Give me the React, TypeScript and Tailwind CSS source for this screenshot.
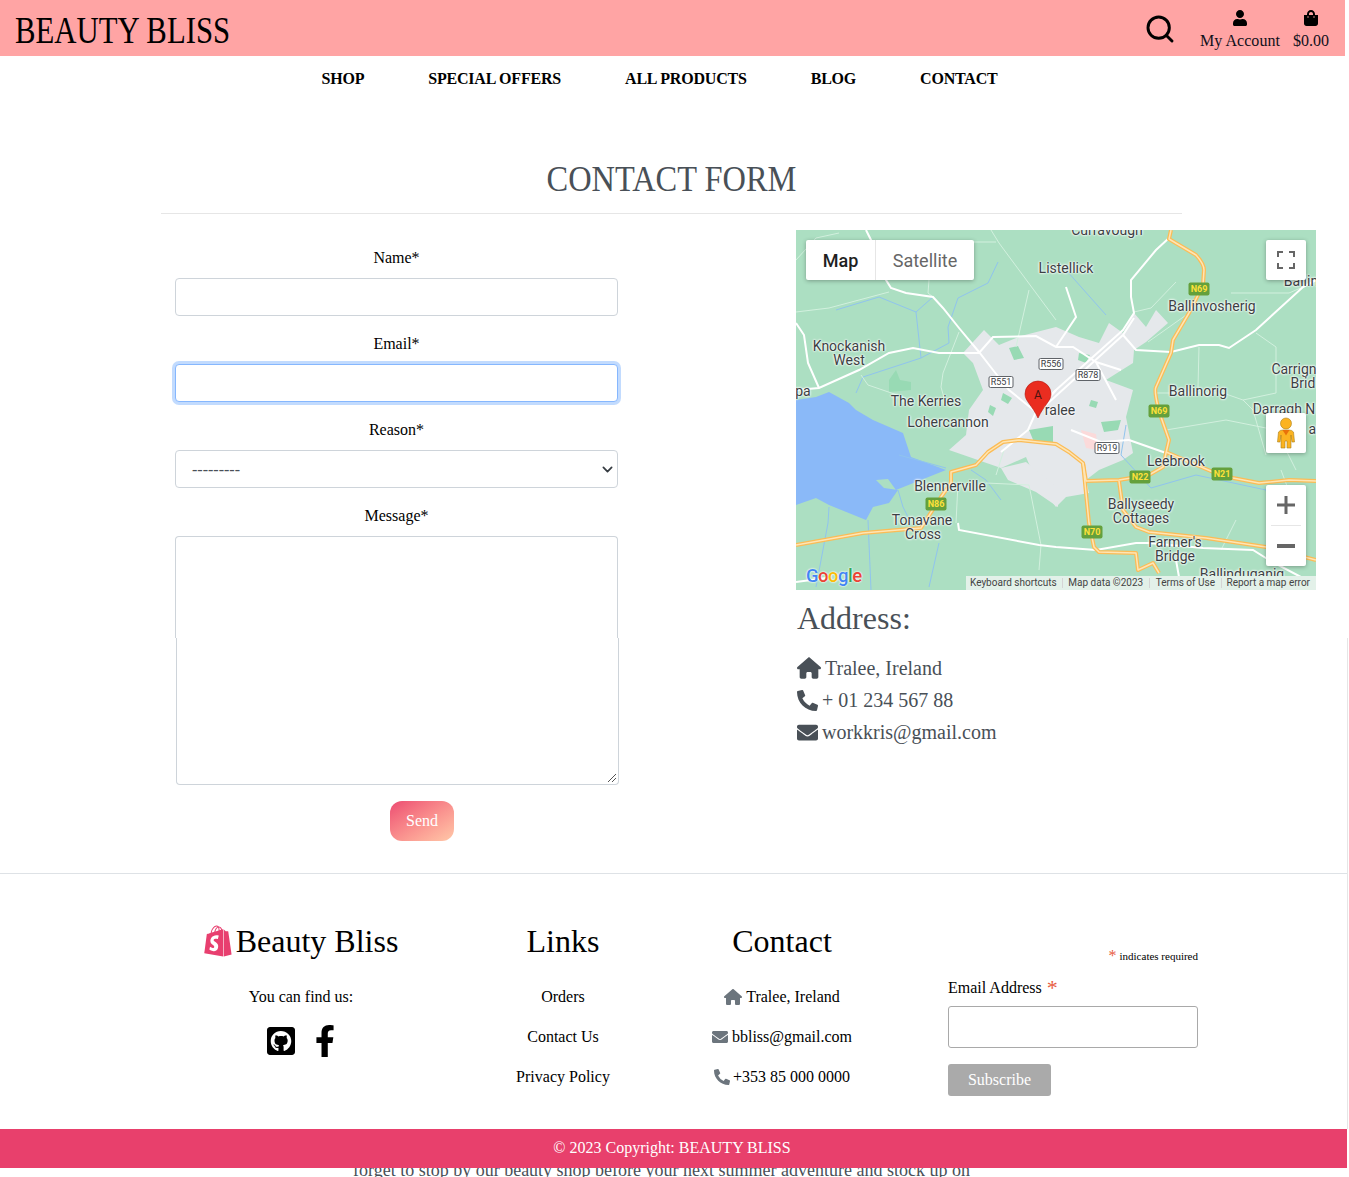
import React from 'react';
import { FaPhoneAlt, FaEnvelope, FaUser, FaShoppingBag, FaGithubSquare, FaFacebookF, FaShopify } from 'react-icons/fa';
import { FaHouse } from 'react-icons/fa6';
import { Search } from 'lucide-react';

const navItems = ['SHOP', 'SPECIAL OFFERS', 'ALL PRODUCTS', 'BLOG', 'CONTACT'];

// place labels on the map canvas
const mapLabels: [string, number, number][] = [
  ['Curravough', 311, 0],
  ['Listellick', 270, 38],
  ['Ballinvosherig', 416, 76],
  ['Ballin', 505, 51],
  ['Knockanish', 53, 116],
  ['West', 53, 130],
  ['Carrign', 498, 139],
  ['Brid', 507, 153],
  ['pa', 7, 161],
  ['Ballinorig', 402, 161],
  ['The Kerries', 130, 171],
  ['Darragh N', 488, 179],
  ['Lohercannon', 152, 192],
  ['ralee', 264, 180],
  ['ai', 518, 199],
  ['Leebrook', 380, 231],
  ['Blennerville', 154, 256],
  ['Ballyseedy', 345, 274],
  ['Cottages', 345, 288],
  ['Tonavane', 126, 290],
  ['Cross', 127, 304],
  ["Farmer's", 379, 312],
  ['Bridge', 379, 326],
  ['Ballinduganig', 446, 344],
];

const shields: [string, number, number][] = [
  ['N69', 403, 59],
  ['N69', 363, 181],
  ['N22', 344, 247],
  ['N21', 426, 244],
  ['N86', 140, 274],
  ['N70', 296, 302],
];

const routes: [string, number, number, number][] = [
  ['R556', 255, 134, 25],
  ['R878', 292, 145, 25],
  ['R551', 205, 152, 25],
  ['R919', 311, 218, 25],
];

const highways = [
  'M375 0L373 9L400 25Q408 34 408 40L407 55L393 83L377 110L375 123L360 157Q358 160 362 177L365 187L373 210L370 223L367 237L353 245L323 250L290 251L287 233L273 222L260 214L223 210L207 212L192 222L180 235L155 242L155 253L145 267L125 298L67 303L0 315',
  'M370 222L417 242L437 248L463 253L493 250L520 251',
  'M287 233L293 293L298 317L303 322L340 323L342 340L357 333L363 343',
  'M323 251L327 280L340 297L353 302L410 308L470 317L520 330',
];

const localRoads = [
  'M70 0L75 10L90 50L95 58L110 63L137 67L147 78L163 98L183 122L197 140L213 160L240 182',
  'M0 160L23 158L63 140L93 123L117 118L143 123L183 123L197 107L240 106L260 117L277 117L300 132L325 140',
  'M0 93L8 105L12 133L23 158',
  'M373 8L360 20L335 50L335 67L338 83L327 100L260 160L240 182',
  'M338 88L327 105L250 175',
  'M327 105L340 120L375 122L403 115L423 115L433 118L460 100L507 57L520 50',
  'M270 57L280 87L260 117',
  'M162 293L163 300L243 315L260 317L300 320L340 313L353 313L407 318L457 320L473 330L520 355',
  'M380 330L383 347L384 360',
  'M260 160L240 182M300 132L320 170M333 210L370 223M240 182L232 200L205 222',
  'M275 200L305 212L333 210',
  'M0 352L30 348',
];

const minorRoads = [
  'M0 82L33 78L93 62',
  'M133 50L132 63L137 67',
  'M163 102L147 143L145 157L150 175',
  'M233 60L220 117',
  'M195 0L203 13L260 90',
  'M43 3L20 8L0 30',
  'M110 12L200 12',
  'M338 82L355 78L380 52',
  'M435 63L493 63L507 57',
  'M393 83L352 112',
  'M460 103L480 117L480 163L447 170L427 163L360 163',
  'M403 117L402 157',
  'M447 170L457 180L470 225',
  'M162 253L160 293',
  'M190 253L233 255L245 315L243 340',
  'M208 220L200 245',
  'M440 290L425 320M500 280L485 240',
  'M370 200L430 190L480 200L500 240',
  'M65 145L72 155L110 168',
];

const rivers = [
  'M40 80L83 67L120 82L125 128L153 113L152 97L162 68L192 53L202 32',
  'M120 82L137 67',
  'M125 128L67 147L60 163',
  'M33 277L32 293L20 357',
  'M72 290L75 360',
  'M102 260L107 277L112 287',
  'M143 313L133 357',
  'M103 225L150 238',
  'M175 240L190 250L205 270',
  'M330 195L325 225L355 258L400 245',
  'M400 245L470 260L480 300',
  'M270 40L310 85',
];

const GoogleMap = () => (
  <div className="relative h-[360px] w-[520px] overflow-hidden bg-[#acdfc2]">
    <svg className="absolute inset-0" width="520" height="360" viewBox="0 0 520 360" fill="none">
      {/* town */}
      <path d="M167 123L188 100L203 115L225 106L260 97L283 107L303 113L313 93L327 103L338 83L350 97L360 80L372 93L350 112L338 120L337 133L310 150L337 160L330 187L337 223L327 230L303 240L290 250L293 263L270 267L260 277L242 255L230 227L205 238L153 220L170 205L173 180L187 160L177 133Z" fill="#e5e8eb" />
      <path d="M205 238L230 232L262 258L262 277L240 262L212 250Z" fill="#e5e8eb" />
      <path d="M213 118L222 116L228 128L218 130ZM283 123L294 125L290 133L282 130ZM207 163L216 168L212 174L205 170ZM194 175L200 178L197 186L192 182ZM233 200L257 196L257 213L238 212ZM305 192L325 190L322 200L308 202ZM295 170L302 172L300 178L293 176Z" fill="#98dab4" />
      <path d="M93 150L100 140L104 150L115 152L115 160L93 162Z" fill="#98dab4" />
      <path d="M285 200L300 204L302 220L290 218Z" fill="#fbdada" />
      {/* bay */}
      <path d="M0 170L20 167L33 162L53 173L60 180L77 190L107 203L115 227L150 240L100 260L92 249L80 250L88 258L102 260L93 273L77 277L70 290L33 275L20 268L0 275Z" fill="#8ab9f8" />
      {rivers.map(d => (
        <path key={d} d={d} stroke="#90c4ee" strokeWidth="1" />
      ))}
      {minorRoads.map(d => (
        <path key={d} d={d} stroke="#d2f0de" strokeWidth="1" />
      ))}
      {localRoads.map(d => (
        <path key={d} d={d} stroke="#ffffff" strokeWidth="2" />
      ))}
      {highways.map(d => (
        <path key={d} d={d} stroke="#fbbc56" strokeWidth="4" strokeLinejoin="round" />
      ))}
      {highways.map(d => (
        <path key={d + 'inner'} d={d} stroke="#fee5b5" strokeWidth="1.5" strokeLinejoin="round" />
      ))}
      {/* pin */}
      <path d="M242 188C236 175 229 171 229 164A13 13 0 0 1 255 164C255 171 248 175 242 188Z" fill="#ea2d20" stroke="#b3160d" strokeWidth="0.6" />
    </svg>

    {/* labels stop where the attribution bar starts */}
    <div className="absolute inset-x-0 top-0 h-[346px] overflow-hidden">
      {mapLabels.map(([text, x, y]) => (
        <span
          key={text + x}
          className="absolute -translate-x-1/2 -translate-y-1/2 whitespace-nowrap font-['Roboto',sans-serif] text-[14px] leading-none text-[#3c4043] [text-shadow:0_0_2px_#fff,0_0_2px_#fff,0_0_3px_#fff]"
          style={{ left: x, top: y }}
        >
          {text}
        </span>
      ))}
    </div>

    <span className="absolute left-[238px] top-[159px] font-['Roboto',sans-serif] text-[12px] leading-none text-[#4a1410]">A</span>

    {shields.map(([text, x, y]) => (
      <span
        key={text + x}
        className="absolute flex h-[13px] w-[21px] -translate-x-1/2 -translate-y-1/2 items-center justify-center rounded-[2px] bg-[#64a03c] font-['Roboto',sans-serif] text-[9px] font-bold leading-none text-[#fde03a]"
        style={{ left: x, top: y }}
      >
        {text}
      </span>
    ))}

    {routes.map(([text, x, y, w]) => (
      <span
        key={text}
        className="absolute flex h-[12px] -translate-x-1/2 -translate-y-1/2 items-center justify-center rounded-[2px] border border-[#5f6368] bg-white font-['Roboto',sans-serif] text-[9px] leading-none text-[#3c4043]"
        style={{ left: x, top: y, width: w }}
      >
        {text}
      </span>
    ))}

    {/* map type */}
    <div className="absolute left-[10px] top-[10px] flex h-[40px] rounded-[2px] bg-white font-['Roboto',sans-serif] text-[18px] shadow-[0_1px_4px_rgba(0,0,0,0.3)]">
      <div className="flex w-[70px] items-center justify-center border-r border-[#e6e6e6] font-medium text-[#1f1f1f]">Map</div>
      <div className="flex w-[98px] items-center justify-center text-[#666666]">Satellite</div>
    </div>

    {/* fullscreen */}
    <div className="absolute right-[10px] top-[10px] flex h-[40px] w-[40px] items-center justify-center rounded-[2px] bg-white shadow-[0_1px_4px_rgba(0,0,0,0.3)]">
      <svg width="18" height="18" viewBox="0 0 18 18" fill="#666666">
        <path d="M0 0h6v2H2v4H0zM12 0h6v6h-2V2h-4zM0 12h2v4h4v2H0zM16 12h2v6h-6v-2h4z" />
      </svg>
    </div>

    {/* pegman */}
    <div className="absolute right-[10px] top-[183px] h-[40px] w-[40px] rounded-[2px] bg-white shadow-[0_1px_4px_rgba(0,0,0,0.3)]">
      <svg width="40" height="40" viewBox="0 0 40 40">
        <circle cx="20" cy="10.5" r="5.5" fill="#fbb321" stroke="#a8801c" strokeWidth="0.6" />
        <path d="M12.5 19Q14 17 17 17H23Q26 17 27.5 19L28.5 29H26L25 22V35H21V28H19V35H15V22L14 29H11.5Z" fill="#fbb321" stroke="#a8801c" strokeWidth="0.6" />
        <path d="M16.5 17H23.5L20 22.5Z" fill="#e8710a" />
      </svg>
    </div>

    {/* zoom */}
    <div className="absolute right-[10px] top-[255px] flex h-[81px] w-[40px] flex-col items-center rounded-[2px] bg-white shadow-[0_1px_4px_rgba(0,0,0,0.3)]">
      <div className="flex h-[40px] w-full items-center justify-center">
        <svg width="18" height="18" viewBox="0 0 18 18" fill="#666666"><path d="M7.5 0h3v7.5H18v3h-7.5V18h-3v-7.5H0v-3h7.5z" /></svg>
      </div>
      <div className="h-px w-[30px] bg-[#e6e6e6]" />
      <div className="flex h-[40px] w-full items-center justify-center">
        <svg width="18" height="4" viewBox="0 0 18 4" fill="#666666"><path d="M0 0h18v4H0z" /></svg>
      </div>
    </div>

    {/* google logo */}
    <div className="absolute bottom-[3px] left-[10px] flex font-['Roboto',sans-serif] text-[18.5px] font-medium leading-[22px] tracking-[-0.5px] [text-shadow:0_0_2px_#fff,0_0_2px_#fff]">
      <span className="text-[#4285f4]">G</span>
      <span className="text-[#ea4335]">o</span>
      <span className="text-[#fbbc05]">o</span>
      <span className="text-[#4285f4]">g</span>
      <span className="text-[#34a853]">l</span>
      <span className="text-[#ea4335]">e</span>
    </div>

    {/* attribution */}
    <div className="absolute bottom-0 right-0 flex h-[14px] w-[350px] items-center justify-between whitespace-nowrap bg-[#e3f1e9] font-['Roboto',sans-serif] text-[10px] leading-none text-[#444444]">
      <span className="pl-[4px]">Keyboard shortcuts</span>
      <span className="border-l border-[#d5d5d5] pl-[5px]">Map data ©2023</span>
      <span className="border-l border-[#d5d5d5] pl-[6px]">Terms of Use</span>
      <span className="border-l border-[#d5d5d5] pl-[5px] pr-[6px]">Report a map error</span>
    </div>
  </div>
);

const Field = ({ label, children }: { label: string; children: React.ReactNode }) => (
  <div className="flex flex-col">
    <label className="h-[24px] text-center text-[16px] leading-[24px] text-black">{label}</label>
    <div className="mt-2">{children}</div>
  </div>
);

const App = () => {
  return (
    <div className="relative h-[1177px] w-[1349px] overflow-hidden bg-white font-['Liberation_Serif',serif] text-[#212529]">
      {/* Header */}
      <header className="flex h-[56px] w-[1345px] items-center justify-between bg-[#ffa4a4] pl-[15px] pr-[16px]">
        <h1 className="mt-[3px] origin-left scale-x-[0.81] whitespace-nowrap text-[38px] leading-none text-black">BEAUTY BLISS</h1>
        <div className="flex items-center">
          <Search size={32} strokeWidth={2.2} className="mr-[24px] mt-[2px] text-black" />
          <div className="mr-[13px] flex flex-col items-center pt-[7px]">
            <FaUser className="h-[16px] w-[16px] text-black" />
            <span className="mt-[3px] text-[16px] leading-[24px] tracking-[0.05px] text-[#10101a]">My Account</span>
          </div>
          <div className="flex flex-col items-center pt-[7px]">
            <FaShoppingBag className="h-[16px] w-[16px] text-black" />
            <span className="mt-[3px] text-[16px] leading-[24px] text-[#10101a]">$0.00</span>
          </div>
        </div>
      </header>

      {/* Nav */}
      <nav className="flex h-[44px] w-[1345px] items-start justify-center gap-[64px] pr-[26px] pt-[11px]">
        {navItems.map(item => (
          <a key={item} className="text-[16px] font-bold leading-[24px] tracking-[-0.2px] text-black">{item}</a>
        ))}
      </nav>

      {/* Title */}
      <div className="mx-auto mt-[57px] w-[1021px] -translate-x-[3px] border-b border-[#e6e6e6] pb-[11px] text-center">
        <h2 className="origin-center scale-x-[0.9] text-[36px] leading-[45px] text-[#495057]">CONTACT FORM</h2>
      </div>

      {/* Form + map */}
      <div className="flex h-[659px] pl-[175px] pt-[16px]">
        <form className="flex w-[443px] flex-col gap-[16px] pt-[16px]">
          <Field label="Name*">
            <input className="block h-[38px] w-full rounded-[4px] border border-[#ced4da] bg-white" />
          </Field>
          <Field label="Email*">
            <input className="block h-[38px] w-full rounded-[4px] border border-[#86b7fe] bg-white shadow-[0_0_0_3px_rgba(13,110,253,0.25)] outline-none" />
          </Field>
          <Field label="Reason*">
            <div className="flex h-[38px] w-full items-center justify-between rounded-[4px] border border-[#ced4da] bg-white pl-4 pr-[4px] text-[16px] text-[#495057]">
              <span className="pt-[2px] leading-none">---------</span>
              <svg width="11" height="11" viewBox="0 0 16 16" fill="none" stroke="#343a40" strokeWidth="2.5" strokeLinecap="round" strokeLinejoin="round">
                <path d="M2 5l6 6 6-6" />
              </svg>
            </div>
          </Field>
          <Field label="Message*">
            {/* the capture has a one pixel seam across the textarea */}
            <div className="h-[102px] w-full rounded-t-[4px] border-x border-t border-[#ced4da]" />
            <div className="relative ml-px h-[147px] w-full rounded-b-[4px] border-x border-b border-[#ced4da]">
              <svg className="absolute bottom-px right-px" width="10" height="10" viewBox="0 0 10 10" stroke="#555555" strokeWidth="1">
                <path d="M1 9L9 1M5 9L9 5" />
              </svg>
            </div>
          </Field>
          <button type="button" className="ml-[215px] h-[40px] w-[64px] rounded-[12px] bg-gradient-to-br from-[#ec4a72] to-[#ffc8a8] text-[16px] text-white">
            Send
          </button>
        </form>

        <div className="ml-[178px] w-[520px]">
          <GoogleMap />
          <h3 className="ml-px mt-[8px] text-[32px] leading-[40px] text-[#495057]">Address:</h3>
          <ul className="ml-px mt-[14px] flex flex-col text-[20px] leading-[32px] text-[#495057]">
            <li className="flex items-center gap-[4px]"><FaHouse className="h-[24px] w-[24px]" />Tralee, Ireland</li>
            <li className="flex items-center gap-[4px]"><FaPhoneAlt className="h-[21px] w-[21px]" />+ 01 234 567 88</li>
            <li className="flex items-center gap-[4px]"><FaEnvelope className="h-[21px] w-[21px]" />workkris@gmail.com</li>
          </ul>
        </div>
      </div>

      {/* Footer */}
      <footer className="h-[256px] w-[1347px] border-t border-[#dee2e6] pl-[161px]">
        <div className="flex">
          <div className="flex w-[280px] flex-col items-center pt-[47px]">
            <div className="flex h-[40px] items-center gap-[4px] text-[32px] leading-[40px] text-black">
              <FaShopify className="h-[32px] w-[28px] text-[#e83f6f]" />
              Beauty Bliss
            </div>
            <p className="mt-[24px] text-[16px] leading-[24px] text-black">You can find us:</p>
            <div className="mt-[16px] flex items-center gap-[20px]">
              <FaGithubSquare className="h-[32px] w-[28px] text-black" />
              <FaFacebookF className="h-[32px] w-[20px] text-black" />
            </div>
          </div>

          <div className="ml-[42px] flex w-[160px] flex-col items-center pt-[47px] text-black">
            <div className="h-[40px] text-[32px] leading-[40px]">Links</div>
            <a className="mt-[24px] text-[16px] leading-[24px]">Orders</a>
            <a className="mt-[16px] text-[16px] leading-[24px]">Contact Us</a>
            <a className="mt-[16px] text-[16px] leading-[24px]">Privacy Policy</a>
          </div>

          <div className="ml-[39px] flex w-[200px] flex-col items-center pt-[47px] text-black">
            <div className="h-[40px] text-[32px] leading-[40px]">Contact</div>
            <p className="mt-[24px] flex items-center gap-[4px] text-[16px] leading-[24px]"><FaHouse className="h-[18px] w-[18px] text-[#6c757d]" />Tralee, Ireland</p>
            <p className="mt-[16px] flex items-center gap-[4px] text-[16px] leading-[24px]"><FaEnvelope className="h-[16px] w-[16px] text-[#6c757d]" />bbliss@gmail.com</p>
            <p className="mt-[16px] flex items-center gap-[3px] text-[16px] leading-[24px]"><FaPhoneAlt className="h-[16px] w-[16px] text-[#6c757d]" />+353 85 000 0000</p>
          </div>

          <div className="ml-[66px] w-[250px] pt-[75px]">
            <div className="flex h-[14px] items-center justify-end gap-[3px] text-[11px] leading-[14px] text-black">
              <span className="text-[16px] leading-[14px] text-[#e85c41]">*</span>
              indicates required
            </div>
            <label className="mt-[13px] flex h-[24px] items-center gap-[5px] text-[16px] leading-[24px] text-black">
              Email Address <span className="text-[22px] leading-[24px] text-[#e85c41]">*</span>
            </label>
            <input className="mt-[6px] block h-[42px] w-[250px] rounded-[3px] border border-[#a9a9a9] bg-white" />
            <button type="button" className="mt-[16px] h-[32px] w-[103px] rounded-[3px] bg-[#aaaaaa] text-[16px] text-white">Subscribe</button>
          </div>
        </div>
      </footer>

      {/* Copyright bar, stray text from the capture just under it */}
      <div className="flex h-[39px] w-[1347px] items-center justify-center bg-[#e8406c] pb-[2px] pr-[3px] text-[16px] text-white">
        © 2023 Copyright: BEAUTY BLISS
      </div>
      <p className="h-[9px] w-[1347px] overflow-hidden pr-[24px] text-center text-[18px] leading-[9px] text-[#495057]">
        <span className="relative -top-[2px]">forget to stop by our beauty shop before your next summer adventure and stock up on</span>
      </p>

      {/* page edge seam */}
      <div className="absolute left-[1347px] top-[638px] h-[491px] w-px bg-[#e6e6e6]" />
    </div>
  );
};

export default App;
